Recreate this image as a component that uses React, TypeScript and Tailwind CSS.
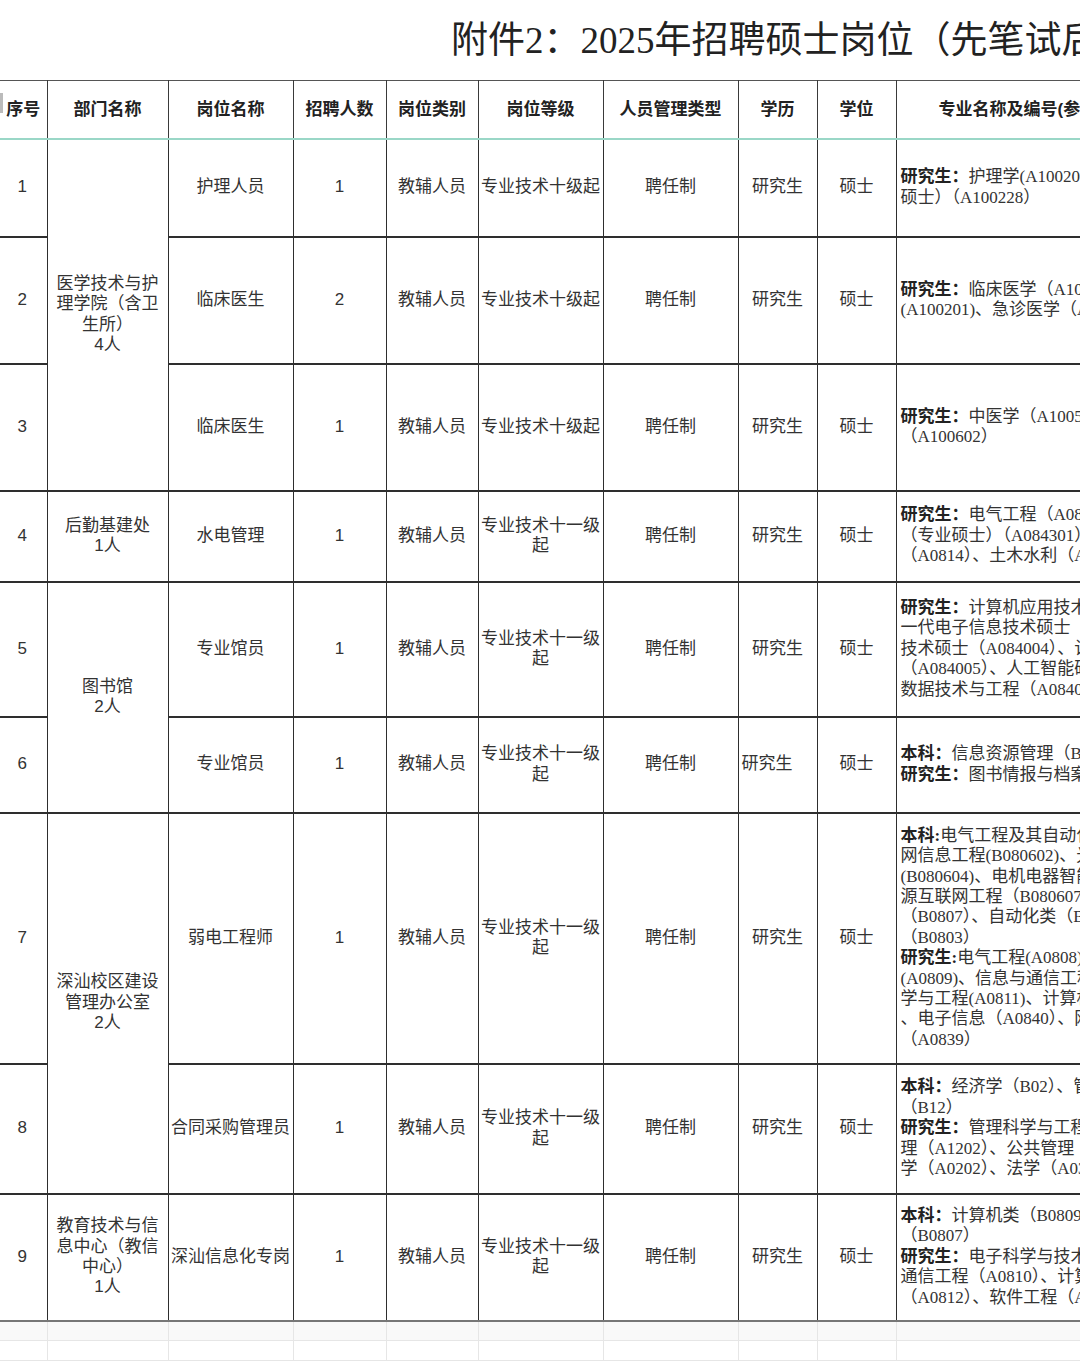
import React from "react";

type Row = {
  no: string;
  dept?: { text: string[]; span: number };
  post: string;
  count: string;
  grade: string[];
  eduLeft?: boolean;
  h: string;
  major: string[];
};

const rows: Row[] = [
  {
    no: "1",
    dept: { text: ["医学技术与护理学院（含卫生所）", "4人"], span: 3 },
    post: "护理人员",
    count: "1",
    grade: ["专业技术十级起"],
    h: "h-[98px]",
    major: ["研究生：护理学(A100209)、护理（专业", "硕士）（A100228）"],
  },
  {
    no: "2",
    post: "临床医生",
    count: "2",
    grade: ["专业技术十级起"],
    h: "h-[127px]",
    major: ["研究生：临床医学（A1002）、内科学", "(A100201)、急诊医学（A100218）"],
  },
  {
    no: "3",
    post: "临床医生",
    count: "1",
    grade: ["专业技术十级起"],
    h: "h-[127px]",
    major: ["研究生：中医学（A1005）、中西医结合", "（A100602）"],
  },
  {
    no: "4",
    dept: { text: ["后勤基建处", "1人"], span: 1 },
    post: "水电管理",
    count: "1",
    grade: ["专业技术十一级", "起"],
    h: "h-[91px]",
    major: [
      "研究生：电气工程（A0808）、电子信息",
      "（专业硕士）（A084301）、土木工程",
      "（A0814）、土木水利（A0859）",
    ],
  },
  {
    no: "5",
    dept: { text: ["图书馆", "2人"], span: 2 },
    post: "专业馆员",
    count: "1",
    grade: ["专业技术十一级", "起"],
    h: "h-[135px]",
    major: [
      "研究生：计算机应用技术（A081203）、新",
      "一代电子信息技术硕士（A084001）、通信",
      "技术硕士（A084004）、计算机技术硕士",
      "（A084005）、人工智能硕士（A084011）",
      "数据技术与工程（A084006）",
    ],
  },
  {
    no: "6",
    post: "专业馆员",
    count: "1",
    grade: ["专业技术十一级", "起"],
    eduLeft: true,
    h: "h-[96px]",
    major: ["本科：信息资源管理（B120503）", "研究生：图书情报与档案管理（A1205）"],
  },
  {
    no: "7",
    dept: { text: ["深汕校区建设管理办公室", "2人"], span: 2 },
    post: "弱电工程师",
    count: "1",
    grade: ["专业技术十一级", "起"],
    h: "h-[251px]",
    major: [
      "本科:电气工程及其自动化(B080601)、智能电",
      "网信息工程(B080602)、光源与照明",
      "(B080604)、电机电器智能化(B080605)、能",
      "源互联网工程（B080607T）、电子信息类",
      "（B0807）、自动化类（B0808）、机械类",
      "（B0803）",
      "研究生:电气工程(A0808)、控制科学与工程",
      "(A0809)、信息与通信工程(A0810)、控制科",
      "学与工程(A0811)、计算机科学与技术",
      "、电子信息（A0840）、网络空间安全",
      "（A0839）",
    ],
  },
  {
    no: "8",
    post: "合同采购管理员",
    count: "1",
    grade: ["专业技术十一级", "起"],
    h: "h-[130px]",
    major: [
      "本科：经济学（B02）、管理学",
      "（B12）",
      "研究生：管理科学与工程（A1201）、工商管",
      "理（A1202）、公共管理（A1204）、经济",
      "学（A0202）、法学（A0301）",
    ],
  },
  {
    no: "9",
    dept: { text: ["教育技术与信息中心（教信中心）", "1人"], span: 1 },
    post: "深汕信息化专岗",
    count: "1",
    grade: ["专业技术十一级", "起"],
    h: "h-[127px]",
    major: [
      "本科：计算机类（B0809）、电子信息类",
      "（B0807）",
      "研究生：电子科学与技术（A0809）、信息与",
      "通信工程（A0810）、计算机科学与技术",
      "（A0812）、软件工程（A0835）",
    ],
  },
];

const headers = ["序号", "部门名称", "岗位名称", "招聘人数", "岗位类别", "岗位等级", "人员管理类型", "学历", "学位"];

const sans = "font-['Liberation_Sans','Noto_Sans_CJK_SC',sans-serif]";
const serif = "font-['Liberation_Serif','Noto_Sans_CJK_SC',serif]";
const cell = "border-x-[1.5px] border-y-2 border-[#2e2e2e] text-center align-middle px-[2px] text-[17px] leading-[20.4px] text-[#333]";

function MajorLine({ line }: { line: string }) {
  const m = line.match(/^(研究生|本科)[：:]/);
  if (!m) return <div>{line}</div>;
  return (
    <div>
      <span className="font-bold text-[#222]">{m[0]}</span>
      {line.slice(m[0].length)}
    </div>
  );
}

export default function App() {
  const last = rows.length - 1;
  return (
    <div className="w-[1080px] h-[1361px] overflow-hidden bg-white relative">
      <div className="h-[80px] flex items-center pl-[451px] pt-[2px]">
        <h1 className={`${serif} text-[37px] font-normal text-[#222] whitespace-nowrap`}>
          附件2：2025年招聘硕士岗位（先笔试后面试）
        </h1>
      </div>
      <div className="absolute left-0 top-[93px] w-[3px] h-[20px] bg-[#bbb]" />
      <table className={`${sans} border-collapse table-fixed w-[1196px]`}>
        <colgroup>
          <col className="w-[47px]" />
          <col className="w-[121px]" />
          <col className="w-[125px]" />
          <col className="w-[93px]" />
          <col className="w-[92px]" />
          <col className="w-[125px]" />
          <col className="w-[135px]" />
          <col className="w-[79px]" />
          <col className="w-[79px]" />
          <col className="w-[300px]" />
        </colgroup>
        <thead>
          <tr className="h-[58px]">
            {headers.map((t, i) => (
              <th
                key={t}
                className={`border-x-[1.5px] border-t-[1.5px] border-b-2 border-[#3a3a3a] border-t-[#555] border-b-[#9ad7c7] text-[17px] font-bold text-[#222] whitespace-nowrap ${i === 0 ? "border-l-0" : ""}`}
              >
                {t}
              </th>
            ))}
            <th className="border-l-[1.5px] border-t-[1.5px] border-b-2 border-[#3a3a3a] border-t-[#555] border-b-[#9ad7c7] text-left pl-[42px] text-[17px] font-bold text-[#222] whitespace-nowrap">
              专业名称及编号(参照国家学科目录)
            </th>
          </tr>
        </thead>
        <tbody>
          {rows.map((r, i) => {
            const bottom = i === last ? "border-b-[#777] border-b-[2.5px]" : "";
            return (
              <tr key={r.no} className={r.h}>
                <td className={`${cell} ${bottom} border-l-0 pr-[4px]`}>{r.no}</td>
                {r.dept && (
                  <td rowSpan={r.dept.span} className={`${cell} ${i + r.dept.span - 1 === last ? "border-b-[#777] border-b-[2.5px]" : ""} px-[6px]`}>
                    {r.dept.text.map((t) => (
                      <div key={t}>{t}</div>
                    ))}
                  </td>
                )}
                <td className={`${cell} ${bottom} whitespace-nowrap`}>{r.post}</td>
                <td className={`${cell} ${bottom}`}>{r.count}</td>
                <td className={`${cell} ${bottom}`}>教辅人员</td>
                <td className={`${cell} ${bottom}`}>
                  {r.grade.map((t) => (
                    <div key={t}>{t}</div>
                  ))}
                </td>
                <td className={`${cell} ${bottom}`}>聘任制</td>
                <td className={`${cell} ${bottom} ${r.eduLeft ? "text-left pl-[3px]" : ""}`}>研究生</td>
                <td className={`${cell} ${bottom}`}>硕士</td>
                <td className={`${cell} ${bottom} border-r-0 ${serif} text-left pl-[4px] whitespace-nowrap`}>
                  {r.major.map((l) => (
                    <MajorLine key={l} line={l} />
                  ))}
                </td>
              </tr>
            );
          })}
          {[0, 1].map((k) => (
            <tr key={k} className={`h-[20px] ${k === 0 ? "bg-[#f9f9f9]" : ""}`}>
              {Array.from({ length: 10 }).map((_, j) => (
                <td key={j} className={`border border-[#e6e6e6] ${j === 0 ? "border-l-0" : ""}`} />
              ))}
            </tr>
          ))}
        </tbody>
      </table>
    </div>
  );
}
